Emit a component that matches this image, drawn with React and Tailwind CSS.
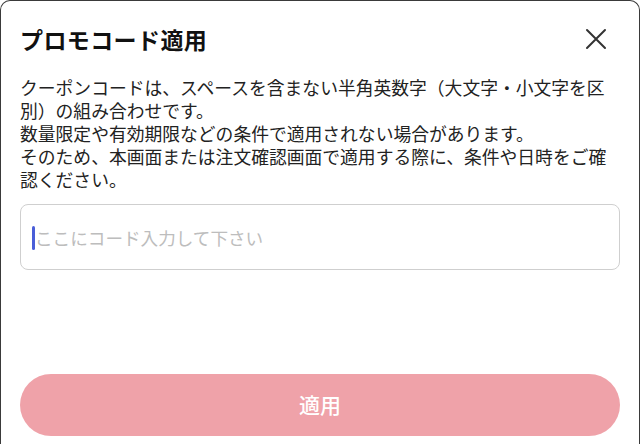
import React, { useState } from 'react';

const PromoCodeModal = () => {
  const [code, setCode] = useState('');

  return (
    <div
      className="w-[640px] h-[444px] overflow-hidden bg-white"
      style={{ fontFamily: '"Noto Sans CJK JP", "Noto Sans", sans-serif' }}
    >
      <div className="h-[460px] bg-white border-x border-t border-[#3a3a3a] rounded-t-[10px] px-[19px] pt-[23px] flex flex-col">
        <div className="flex items-center justify-between h-[30px]">
          <h2 className="text-[23px] font-bold text-[#111] leading-none tracking-[0.4px]">プロモコード適用</h2>
          <button className="w-[30px] h-[30px] mr-[9px] flex items-center justify-center text-[#333]">
            <svg width="22" height="22" viewBox="0 0 22 22" fill="none" stroke="currentColor" strokeWidth="2" strokeLinecap="round">
              <path d="M2 2 L20 20 M20 2 L2 20" />
            </svg>
          </button>
        </div>

        <p className="mt-[22px] text-[17.8px] leading-[23px] text-[#222] whitespace-nowrap">
          クーポンコードは、スペースを含まない半角英数字（大文字・小文字を区
          <br />
          別）の組み合わせです。
          <br />
          数量限定や有効期限などの条件で適用されない場合があります。
          <br />
          そのため、本画面または注文確認画面で適用する際に、条件や日時をご確
          <br />
          認ください。
        </p>

        <div className="relative mt-[13px] h-[66px] w-[600px] border border-[#cfcfcf] rounded-[8px]">
          <input
            value={code}
            onChange={(e) => setCode(e.target.value)}
            placeholder="ここにコード入力して下さい"
            className="w-full h-full bg-transparent pl-[14px] pr-3 text-[17.6px] text-[#222] placeholder-[#bdbdbd] outline-none"
          />
          {code === '' && (
            <span className="absolute left-[11px] top-[21px] w-[3px] h-[24px] rounded-full bg-[#4a5ed8]" />
          )}
        </div>

        <button className="mt-[104px] h-[62px] w-[600px] rounded-full bg-[#efa2a9] text-white text-[21px] font-medium">
          適用
        </button>
      </div>
    </div>
  );
};

export default function App() {
  return <PromoCodeModal />;
}
